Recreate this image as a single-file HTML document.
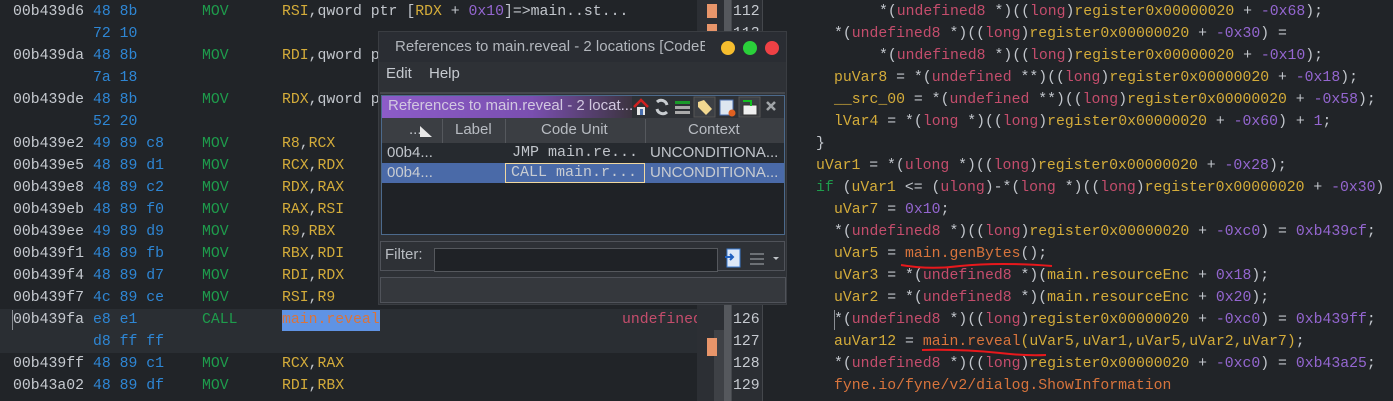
<!DOCTYPE html>
<html><head><meta charset="utf-8"><style>
body{margin:0;width:1393px;height:401px;background:#212428;overflow:hidden;position:relative;font-family:"Liberation Mono","DejaVu Sans Mono",monospace;font-size:14.8px;}
.l{position:absolute;white-space:pre;line-height:22px;height:22px;}
.a{color:#c6cad0}.b{color:#2e86d4}.m{color:#1e9c4c}.r{color:#d4ac3a}.g{color:#c2c6cc}.p{color:#9466d0}.t{color:#c44d6c}.o{color:#d8743c}
.s{font-family:"Liberation Sans","DejaVu Sans",sans-serif;}
.ic{position:absolute;}
</style></head><body>
<div style="position:absolute;left:0;top:309px;width:697px;height:44px;background:#2a2e33"></div>
<div style="position:absolute;left:12px;top:310px;width:1px;height:20px;background:#8a8e94"></div>
<div style="position:absolute;left:282px;top:310px;width:98px;height:21px;background:#5f93e4"></div>

<div class="l" style="top:1px;left:13px"><span class="a">00b439d6</span> <span class="b">48 8b</span></div>
<div class="l" style="top:1px;left:202px"><span class="m">MOV</span></div>
<div class="l" style="top:1px;left:282px"><span class="r">RSI</span><span class="g">,qword ptr [</span><span class="r">RDX</span><span class="g"> + </span><span class="p">0x10</span><span class="g">]=&gt;main..st...</span></div>
<div class="l" style="top:23px;left:93px"><span class="b">72 10</span></div>
<div class="l" style="top:45px;left:13px"><span class="a">00b439da</span> <span class="b">48 8b</span></div>
<div class="l" style="top:45px;left:202px"><span class="m">MOV</span></div>
<div class="l" style="top:45px;left:282px"><span class="r">RDI</span><span class="g">,qword ptr</span></div>
<div class="l" style="top:67px;left:93px"><span class="b">7a 18</span></div>
<div class="l" style="top:89px;left:13px"><span class="a">00b439de</span> <span class="b">48 8b</span></div>
<div class="l" style="top:89px;left:202px"><span class="m">MOV</span></div>
<div class="l" style="top:89px;left:282px"><span class="r">RDX</span><span class="g">,qword ptr</span></div>
<div class="l" style="top:111px;left:93px"><span class="b">52 20</span></div>
<div class="l" style="top:133px;left:13px"><span class="a">00b439e2</span> <span class="b">49 89 c8</span></div><div class="l" style="top:133px;left:202px"><span class="m">MOV</span></div><div class="l" style="top:133px;left:282px"><span class="r">R8</span><span class="g">,</span><span class="r">RCX</span></div>
<div class="l" style="top:155px;left:13px"><span class="a">00b439e5</span> <span class="b">48 89 d1</span></div><div class="l" style="top:155px;left:202px"><span class="m">MOV</span></div><div class="l" style="top:155px;left:282px"><span class="r">RCX</span><span class="g">,</span><span class="r">RDX</span></div>
<div class="l" style="top:177px;left:13px"><span class="a">00b439e8</span> <span class="b">48 89 c2</span></div><div class="l" style="top:177px;left:202px"><span class="m">MOV</span></div><div class="l" style="top:177px;left:282px"><span class="r">RDX</span><span class="g">,</span><span class="r">RAX</span></div>
<div class="l" style="top:199px;left:13px"><span class="a">00b439eb</span> <span class="b">48 89 f0</span></div><div class="l" style="top:199px;left:202px"><span class="m">MOV</span></div><div class="l" style="top:199px;left:282px"><span class="r">RAX</span><span class="g">,</span><span class="r">RSI</span></div>
<div class="l" style="top:221px;left:13px"><span class="a">00b439ee</span> <span class="b">49 89 d9</span></div><div class="l" style="top:221px;left:202px"><span class="m">MOV</span></div><div class="l" style="top:221px;left:282px"><span class="r">R9</span><span class="g">,</span><span class="r">RBX</span></div>
<div class="l" style="top:243px;left:13px"><span class="a">00b439f1</span> <span class="b">48 89 fb</span></div><div class="l" style="top:243px;left:202px"><span class="m">MOV</span></div><div class="l" style="top:243px;left:282px"><span class="r">RBX</span><span class="g">,</span><span class="r">RDI</span></div>
<div class="l" style="top:265px;left:13px"><span class="a">00b439f4</span> <span class="b">48 89 d7</span></div><div class="l" style="top:265px;left:202px"><span class="m">MOV</span></div><div class="l" style="top:265px;left:282px"><span class="r">RDI</span><span class="g">,</span><span class="r">RDX</span></div>
<div class="l" style="top:287px;left:13px"><span class="a">00b439f7</span> <span class="b">4c 89 ce</span></div><div class="l" style="top:287px;left:202px"><span class="m">MOV</span></div><div class="l" style="top:287px;left:282px"><span class="r">RSI</span><span class="g">,</span><span class="r">R9</span></div>
<div class="l" style="top:309px;left:13px"><span class="a">00b439fa</span> <span class="b">e8 e1</span></div><div class="l" style="top:309px;left:202px"><span class="m">CALL</span></div><div class="l" style="top:309px;left:282px"><span class="o">main.reveal</span></div>
<div class="l" style="top:309px;left:622px;width:75px;overflow:hidden"><span class="t">undefined</span></div>
<div class="l" style="top:331px;left:93px"><span class="b">d8 ff ff</span></div>
<div class="l" style="top:353px;left:13px"><span class="a">00b439ff</span> <span class="b">48 89 c1</span></div><div class="l" style="top:353px;left:202px"><span class="m">MOV</span></div><div class="l" style="top:353px;left:282px"><span class="r">RCX</span><span class="g">,</span><span class="r">RAX</span></div>
<div class="l" style="top:375px;left:13px"><span class="a">00b43a02</span> <span class="b">48 89 df</span></div><div class="l" style="top:375px;left:202px"><span class="m">MOV</span></div><div class="l" style="top:375px;left:282px"><span class="r">RDI</span><span class="g">,</span><span class="r">RBX</span></div>

<div style="position:absolute;left:697px;top:0;width:27px;height:401px;background:#2c2f34"></div>
<div style="position:absolute;left:714px;top:330px;width:10px;height:71px;background:#3e4146"></div>
<div style="position:absolute;left:724px;top:0;width:7px;height:401px;background:#55585d"></div>
<div style="position:absolute;left:707px;top:4px;width:10px;height:14px;background:#e8956a"></div>
<div style="position:absolute;left:707px;top:24px;width:10px;height:8px;background:#e8956a"></div>
<div style="position:absolute;left:707px;top:338px;width:10px;height:18px;background:#e8956a"></div>
<div style="position:absolute;left:731px;top:0;width:30px;height:401px;background:#2b2e33;border-left:1px solid #44474c;border-right:1px solid #44474c"></div>
<div class="l a" style="left:733px;top:1px;line-height:22px">112<br>113<br>114<br>115<br>116<br>117<br>118<br>119<br>120<br>121<br>122<br>123<br>124<br>125<br>126<br>127<br>128<br>129</div>

<div class="l" style="top:1px;left:879px"><span class="g">*(</span><span class="t">undefined8</span><span class="g"> *)((</span><span class="t">long</span><span class="g">)</span><span class="r">register0x00000020</span><span class="g"> + </span><span class="p">-0x68</span><span class="g">);</span></div>
<div class="l" style="top:23px;left:834px"><span class="g">*(</span><span class="t">undefined8</span><span class="g"> *)((</span><span class="t">long</span><span class="g">)</span><span class="r">register0x00000020</span><span class="g"> + </span><span class="p">-0x30</span><span class="g">) =</span></div>
<div class="l" style="top:45px;left:879px"><span class="g">*(</span><span class="t">undefined8</span><span class="g"> *)((</span><span class="t">long</span><span class="g">)</span><span class="r">register0x00000020</span><span class="g"> + </span><span class="p">-0x10</span><span class="g">);</span></div>
<div class="l" style="top:67px;left:834px"><span class="r">puVar8</span><span class="g"> = *(</span><span class="t">undefined</span><span class="g"> **)((</span><span class="t">long</span><span class="g">)</span><span class="r">register0x00000020</span><span class="g"> + </span><span class="p">-0x18</span><span class="g">);</span></div>
<div class="l" style="top:89px;left:834px"><span class="r">__src_00</span><span class="g"> = *(</span><span class="t">undefined</span><span class="g"> **)((</span><span class="t">long</span><span class="g">)</span><span class="r">register0x00000020</span><span class="g"> + </span><span class="p">-0x58</span><span class="g">);</span></div>
<div class="l" style="top:111px;left:834px"><span class="r">lVar4</span><span class="g"> = *(</span><span class="t">long</span><span class="g"> *)((</span><span class="t">long</span><span class="g">)</span><span class="r">register0x00000020</span><span class="g"> + </span><span class="p">-0x60</span><span class="g">) + </span><span class="p">1</span><span class="g">;</span></div>
<div class="l" style="top:133px;left:816px"><span class="g">}</span></div>
<div class="l" style="top:155px;left:816px"><span class="r">uVar1</span><span class="g"> = *(</span><span class="t">ulong</span><span class="g"> *)((</span><span class="t">long</span><span class="g">)</span><span class="r">register0x00000020</span><span class="g"> + </span><span class="p">-0x28</span><span class="g">);</span></div>
<div class="l" style="top:177px;left:816px"><span class="m">if</span><span class="g"> (</span><span class="r">uVar1</span><span class="g"> &lt;= (</span><span class="t">ulong</span><span class="g">)-*(</span><span class="t">long</span><span class="g"> *)((</span><span class="t">long</span><span class="g">)</span><span class="r">register0x00000020</span><span class="g"> + </span><span class="p">-0x30</span><span class="g">)</span></div>
<div class="l" style="top:199px;left:834px"><span class="r">uVar7</span><span class="g"> = </span><span class="p">0x10</span><span class="g">;</span></div>
<div class="l" style="top:221px;left:834px"><span class="g">*(</span><span class="t">undefined8</span><span class="g"> *)((</span><span class="t">long</span><span class="g">)</span><span class="r">register0x00000020</span><span class="g"> + </span><span class="p">-0xc0</span><span class="g">) = </span><span class="p">0xb439cf</span><span class="g">;</span></div>
<div class="l" style="top:243px;left:834px"><span class="r">uVar5</span><span class="g"> = </span><span class="o">main.genBytes</span><span class="g">();</span></div>
<div class="l" style="top:265px;left:834px"><span class="r">uVar3</span><span class="g"> = *(</span><span class="t">undefined8</span><span class="g"> *)(</span><span class="r">main.resourceEnc</span><span class="g"> + </span><span class="p">0x18</span><span class="g">);</span></div>
<div class="l" style="top:287px;left:834px"><span class="r">uVar2</span><span class="g"> = *(</span><span class="t">undefined8</span><span class="g"> *)(</span><span class="r">main.resourceEnc</span><span class="g"> + </span><span class="p">0x20</span><span class="g">);</span></div>
<div style="position:absolute;left:834px;top:310px;width:1px;height:20px;background:#8a8e94"></div>
<div class="l" style="top:309px;left:834px"><span class="g">*(</span><span class="t">undefined8</span><span class="g"> *)((</span><span class="t">long</span><span class="g">)</span><span class="r">register0x00000020</span><span class="g"> + </span><span class="p">-0xc0</span><span class="g">) = </span><span class="p">0xb439ff</span><span class="g">;</span></div>
<div class="l" style="top:331px;left:834px"><span class="r">auVar12</span><span class="g"> = </span><span class="o">main.reveal</span><span class="r">(uVar5,uVar1,uVar5,uVar2,uVar7)</span><span class="g">;</span></div>
<div class="l" style="top:353px;left:834px"><span class="g">*(</span><span class="t">undefined8</span><span class="g"> *)((</span><span class="t">long</span><span class="g">)</span><span class="r">register0x00000020</span><span class="g"> + </span><span class="p">-0xc0</span><span class="g">) = </span><span class="p">0xb43a25</span><span class="g">;</span></div>
<div class="l" style="top:375px;left:834px"><span class="o">fyne.io/fyne/v2/dialog.ShowInformation</span></div>
<svg style="position:absolute;left:0;top:0" width="1393" height="401"><path d="M901 265 Q930 270 960 266 Q1000 262 1052 266" stroke="#e8181c" stroke-width="2" fill="none"/><path d="M922 350 Q960 349 1000 353 Q1025 356 1046 355" stroke="#e8181c" stroke-width="2" fill="none"/></svg>

<div class="s" style="position:absolute;left:378px;top:31px;width:409px;height:274px;background:#2e3136;border:1px solid #3a3d42;box-sizing:border-box">
 <div style="position:absolute;left:0;top:0;width:100%;height:30px;background:#2a2d33"></div>
 <div style="position:absolute;left:16px;top:6px;width:310px;overflow:hidden;white-space:nowrap;color:#b2b6bc;font-size:15px">References to main.reveal - 2 locations [CodeBrowser]</div>
 <div style="position:absolute;left:342px;top:9px;width:14px;height:14px;border-radius:7px;background:#f6bd2e"></div>
 <div style="position:absolute;left:364px;top:9px;width:14px;height:14px;border-radius:7px;background:#2ad03a"></div>
 <div style="position:absolute;left:386px;top:9px;width:14px;height:14px;border-radius:7px;background:#ef4145"></div>
 <div style="position:absolute;left:0;top:30px;width:100%;height:28px;background:#2e3136"></div>
 <div style="position:absolute;left:7px;top:33px;color:#c6cad0;font-size:15px">Edit</div>
 <div style="position:absolute;left:50px;top:33px;color:#c6cad0;font-size:15px">Help</div>
 <div style="position:absolute;left:1px;top:60px;width:405px;height:2px;background:#45484d"></div>
 <div style="position:absolute;left:2px;top:63px;width:404px;height:140px;border:1px solid #4c6a8c;box-sizing:border-box;background:#1f2226"></div>
 <div style="position:absolute;left:3px;top:64px;width:250px;height:22px;background:linear-gradient(90deg,#8c5cc8,#7a4fb0 60%,#3c3440)"></div>
 <div style="position:absolute;left:253px;top:64px;width:152px;height:22px;background:#2e3136"></div>
 <div style="position:absolute;left:9px;top:65px;width:244px;overflow:hidden;color:#d2c8e0;font-size:15px;white-space:nowrap">References to main.reveal - 2 locat...</div>
 <svg style="position:absolute;left:252px;top:64px" width="150" height="22">
  <path d="M3 11 L10 4 L17 11" stroke="#d02020" stroke-width="2.5" fill="none"/><rect x="6" y="11" width="8" height="8" fill="#e8e8e8"/><rect x="9" y="13" width="3" height="6" fill="#4a70b0"/>
  <path d="M26 6 A6 6 0 0 1 36 9 M36 16 A6 6 0 0 1 26 13" stroke="#c8ccd0" stroke-width="3" fill="none"/>
  <rect x="44" y="5" width="15" height="3" fill="#1a9a2a"/><rect x="44" y="10" width="15" height="3" fill="#aaa"/><rect x="44" y="15" width="15" height="3" fill="#aaa"/>
  <rect x="63" y="1" width="21" height="20" fill="#3c3f44" stroke="#555" /><path d="M67 6 L73 4 L81 13 L75 19 L67 11 Z" fill="#f2d890"/>
  <rect x="89" y="4" width="13" height="15" fill="#dde6f0" stroke="#4a70b0"/><circle cx="101" cy="17" r="3.5" fill="#e06020"/>
  <rect x="108" y="1" width="21" height="20" fill="#3c3f44" stroke="#555"/><rect x="112" y="9" width="14" height="10" fill="#f0f0f0" stroke="#333"/><path d="M112 5 L120 5 L120 10" stroke="#12c020" stroke-width="2" fill="none"/>
  <path d="M136 6 L144 14 M144 6 L136 14" stroke="#a0a4a8" stroke-width="2.5"/>
 </svg>
 <div style="position:absolute;left:3px;top:86px;width:402px;height:25px;background:#3b3e43;border-bottom:1px solid #50535a"></div>
 <div style="position:absolute;left:63px;top:87px;width:1px;height:24px;background:#55585d"></div>
 <div style="position:absolute;left:126px;top:87px;width:1px;height:24px;background:#55585d"></div>
 <div style="position:absolute;left:266px;top:87px;width:1px;height:24px;background:#55585d"></div>
 <div style="position:absolute;left:30px;top:89px;color:#c6cad0;font-size:15px">...</div>
 <svg style="position:absolute;left:40px;top:92px" width="14" height="14"><path d="M1 13 L1 2 L13 13 Z" fill="#e8e8e8"/></svg>
 <div style="position:absolute;left:76px;top:89px;color:#b8bcc2;font-size:15px">Label</div>
 <div style="position:absolute;left:162px;top:89px;color:#b8bcc2;font-size:15px">Code Unit</div>
 <div style="position:absolute;left:309px;top:89px;color:#b8bcc2;font-size:15px">Context</div>
 <div style="position:absolute;left:3px;top:111px;width:402px;height:20px;background:#262a2f"></div>
 <div style="position:absolute;left:3px;top:131px;width:402px;height:20px;background:#4a6aa8"></div>
 <div style="position:absolute;left:126px;top:131px;width:140px;height:20px;border:1px solid #f0d8a0;box-sizing:border-box"></div>
 <div style="position:absolute;left:8px;top:112px;color:#c0c4ca;font-size:15px">00b4...</div>
 <div style="position:absolute;left:8px;top:132px;color:#c8ccd2;font-size:15px">00b4...</div>
 <div style="position:absolute;left:133px;top:112px;color:#c0c4ca;font-family:'Liberation Mono',monospace;font-size:15px">JMP main.re...</div>
 <div style="position:absolute;left:132px;top:132px;color:#c8ccd2;font-family:'Liberation Mono',monospace;font-size:15px">CALL main.r...</div>
 <div style="position:absolute;left:271px;top:112px;width:134px;overflow:hidden;white-space:nowrap;color:#c0c4ca;font-size:15px">UNCONDITIONA...</div>
 <div style="position:absolute;left:271px;top:132px;width:134px;overflow:hidden;white-space:nowrap;color:#c8ccd2;font-size:15px">UNCONDITIONA...</div>
 <div style="position:absolute;left:1px;top:209px;width:405px;height:30px;border:1px solid #50535a;box-sizing:border-box;background:#2e3136"></div>
 <div style="position:absolute;left:6px;top:214px;color:#b8bcc2;font-size:15px">Filter:</div>
 <div style="position:absolute;left:55px;top:216px;width:284px;height:24px;border:1px solid #55585d;box-sizing:border-box;background:#1f2226"></div>
 <svg style="position:absolute;left:345px;top:216px" width="60" height="22"><rect x="3" y="1" width="13" height="18" fill="#dde8f8" stroke="#3a7ad0"/><path d="M1 9 L8 9 M6 6 L9 9 L6 12" stroke="#2060c0" stroke-width="2" fill="none"/><path d="M26 6 L40 6 M26 11 L40 11 M26 16 L40 16" stroke="#6c7075" stroke-width="2"/><path d="M49 9 L55 9 L52 12 Z" fill="#c0c4c8"/></svg>
 <div style="position:absolute;left:1px;top:245px;width:406px;height:26px;border:1px solid #50535a;box-sizing:border-box;background:#35383d"></div>
</div>
</body></html>
